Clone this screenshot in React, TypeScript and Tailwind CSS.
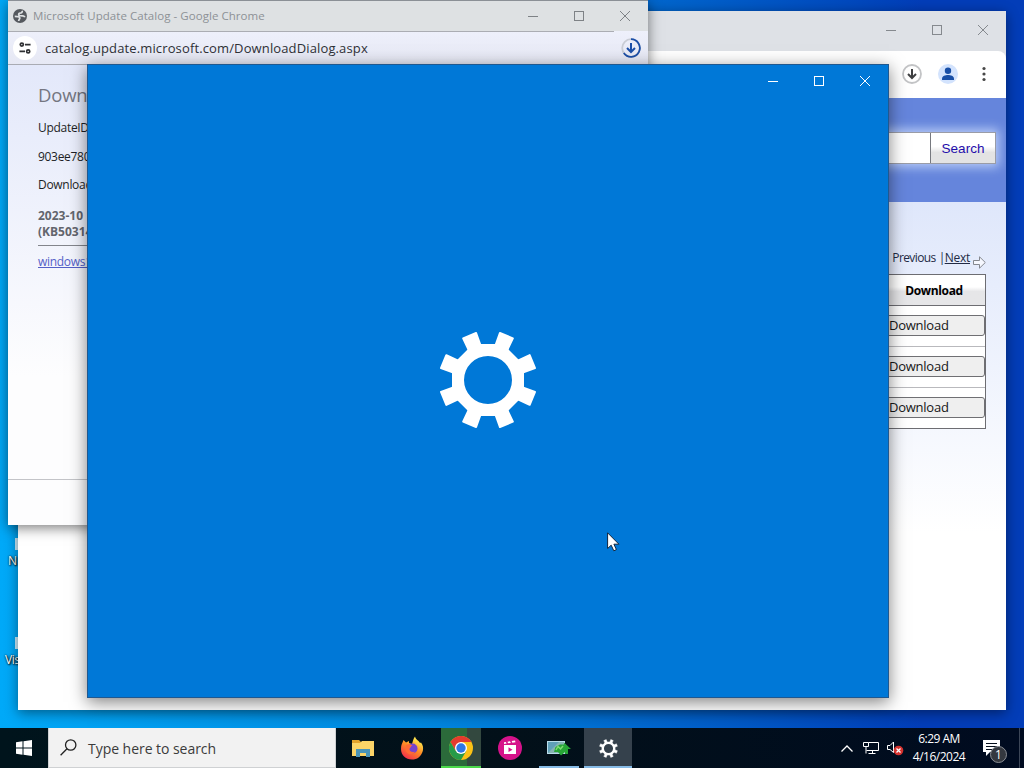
import type { ReactNode } from 'react';

const fileRows = ['Download', 'Download', 'Download'];

const teeth = [22.5, 67.5, 112.5, 157.5, 202.5, 247.5, 292.5, 337.5];

const desktopIcons = [
  { label: 'N', top: 'top-[538px]', left: 'pl-2', strip: 'ml-[7px]' },
  { label: 'Vis', top: 'top-[637px]', left: 'pl-[5px]', strip: 'ml-[10px]' },
];

function Gear({ className }: { className: string }) {
  return (
    <svg className={className} viewBox="-50 -50 100 100" aria-hidden="true">
      <path
        fillRule="evenodd"
        fill="#fff"
        d="M36-14.9 36 14.9 14.9 36-14.9 36-36 14.9-36-14.9-14.9-36 14.9-36ZM24 0A24 24 0 1 0-24 0 24 24 0 1 0 24 0Z"
      />
      {teeth.map((angle) => (
        <path
          key={angle}
          transform={`rotate(${angle})`}
          d="M32-6.2 48-7 48 7 32 6.2Z"
          fill="#fff"
          stroke="#fff"
          strokeWidth="2"
          strokeLinejoin="round"
        />
      ))}
    </svg>
  );
}

function CaptionButtons({ className }: { className: string }) {
  return (
    <div className={`flex ${className}`}>
      <span className="flex h-[30px] w-[46px] items-center justify-center">
        <svg width="10" height="10" viewBox="0 0 10 10" shapeRendering="crispEdges">
          <path d="M0 5.5H10" stroke="currentColor" />
        </svg>
      </span>
      <span className="flex h-[30px] w-[46px] items-center justify-center">
        <svg width="10" height="10" viewBox="0 0 10 10" shapeRendering="crispEdges">
          <rect x="0.5" y="0.5" width="9" height="9" fill="none" stroke="currentColor" />
        </svg>
      </span>
      <span className="flex h-[30px] w-[46px] items-center justify-center">
        <svg width="10" height="10" viewBox="0 0 10 10">
          <path d="M0 0 10 10M10 0 0 10" stroke="currentColor" />
        </svg>
      </span>
    </div>
  );
}

function CatalogWindow() {
  return (
    <div className="absolute top-[11px] left-[18px] flex h-[699px] w-[988px] flex-col overflow-hidden bg-white shadow-[0_3px_12px_rgba(0,0,0,0.45)]">
      <div className="flex h-10 shrink-0 justify-end bg-[#dee1e6] pt-1">
        <CaptionButtons className="text-[#85898e]" />
      </div>
      <div className="h-[47px] shrink-0 bg-[#dee1e6]">
        <div className="flex h-full items-center justify-end gap-4 rounded-t-lg bg-white pr-3 pb-[2px]">
          <svg width="20" height="20" viewBox="0 0 20 20">
            <circle cx="10" cy="10" r="9" fill="#fff" stroke="#c3c4c6" strokeWidth="1.8" />
            <path d="M10 5V14M6 10 10 14 14 10" fill="none" stroke="#3f4042" strokeWidth="2" />
          </svg>
          <svg width="20" height="20" viewBox="0 0 20 20">
            <circle cx="10" cy="10" r="10" fill="#d3e3fd" />
            <circle cx="10" cy="6.800" r="3.200" fill="#174ea6" />
            <path d="M4 16V14.500C4 12 7.500 11 10 11S16 12 16 14.500V16Z" fill="#174ea6" />
          </svg>
          <svg width="20" height="20" viewBox="0 0 20 20" fill="#474747">
            <circle cx="10" cy="4.500" r="1.600" />
            <circle cx="10" cy="10" r="1.600" />
            <circle cx="10" cy="15.500" r="1.600" />
          </svg>
        </div>
      </div>
      <div className="flex h-[104px] shrink-0 items-start justify-end bg-[#6585dc] pt-[34px] pr-[10px]">
        <div className="flex h-8 w-[300px] border border-[#9a9ca6] bg-white shadow-[0_0_10px_3px_rgba(214,228,255,0.75)]">
          <div className="flex-1" />
          <div className="flex w-[65px] items-center justify-center border-l border-[#77797f] bg-linear-to-b from-white from-45% to-[#e3e3e3] to-65% pt-[2px] font-['Liberation_Sans'] text-[13.5px] text-[#1f0dab]">
            Search
          </div>
        </div>
      </div>
      <div className="flex flex-1 flex-col items-end bg-linear-to-b from-[#dfe7fb] to-white to-65% pr-5">
        <div className="mt-[47px] flex h-[18px] items-center text-[12px] text-[#222a44]">
          <span className="tracking-[-0.6px]">Previous</span>
          <span className="mr-[2px] ml-[3px] w-[4px]">|</span>
          <span className="tracking-[-0.25px] underline">Next</span>
          <svg className="mt-2 ml-[3px]" width="13" height="13" viewBox="0 0 13 13">
            <path d="M.5 4.500H6.500V.8L12.300 6.500 6.500 12.200V8.500H.5Z" fill="#f6f8ff" stroke="#85888f" />
          </svg>
        </div>
        <div className="mt-[7px] w-[101px] border border-l-0 border-[#6d6d72] bg-white">
          <div className="flex h-[31px] items-center justify-center border-b border-[#6d6d72] bg-linear-to-b from-white from-40% to-[#e6e6e8] to-55% pt-[2px] pr-[2px] text-[12px] font-bold tracking-[-0.35px] text-black">
            Download
          </div>
          {fileRows.map((label, i) => (
            <div key={i} className="h-[41px] border-b border-[#b9b9bd] pt-[9px] last:h-10 last:border-b-0">
              <div className="flex h-[21px] items-center rounded-r-[3px] border border-[#6f6f73] bg-[#efefef] pl-[3px] text-[13px] tracking-[-0.25px] text-[#161616]">
                {label}
              </div>
            </div>
          ))}
        </div>
      </div>
    </div>
  );
}

function DownloadDialog() {
  return (
    <div className="absolute top-0 left-2 flex h-[525px] w-[640px] flex-col overflow-hidden border-t border-[#8b9096] bg-white shadow-[0_3px_12px_rgba(0,0,0,0.5)]">
      <div className="flex h-[30px] shrink-0 items-center bg-[#dee1e3]">
        <svg className="mb-px ml-[5px] shrink-0" width="14" height="14" viewBox="0 0 16 16">
          <circle cx="8" cy="8" r="8" fill="#55595e" />
          <path
            d="M10.500 2C11 4 9.500 4.800 7.800 4.800 6 5 6 7.300 8 7.600 10.500 7.600 13 8 13.500 9.500M2 8.300C4.500 8.300 7.500 8.600 7.800 10.300 7.800 11.500 6.500 12 6.500 13.800"
            fill="none"
            stroke="#dee1e3"
            strokeWidth="2"
          />
        </svg>
        <span className="ml-[6px] flex-1 text-[11.5px] tracking-[0.05px] text-[#8d9196]">
          Microsoft Update Catalog - Google Chrome
        </span>
        <CaptionButtons className="text-[#7e8286]" />
      </div>
      <div className="flex h-[34px] shrink-0 items-center border-b border-[#a9abb3] bg-linear-to-b from-[#eef0fb] to-[#e6e8f4]">
        <div className="flex h-full flex-1 items-center border-t border-[#abadb3] pl-[5px]">
          <span className="flex size-6 items-center justify-center rounded-full bg-white">
            <svg width="12" height="12" viewBox="0 0 14 14" fill="none" stroke="#2f3033" strokeWidth="2">
              <circle cx="3.300" cy="3" r="1.800" />
              <path d="M7 3H13.500M.5 11H7" />
              <circle cx="10.700" cy="11" r="1.800" />
            </svg>
          </span>
          <span className="ml-2 pt-px text-[13px] tracking-[0.13px] text-[#2f3136]">
            catalog.update.microsoft.com/DownloadDialog.aspx
          </span>
        </div>
        <div className="w-[34px] pl-[7px]">
          <svg width="20" height="20" viewBox="0 0 20 20" fill="none">
            <circle cx="10" cy="10" r="8.800" stroke="#c9ccd4" strokeWidth="1.800" />
            <path d="M10 1.200A8.800 8.800 0 1 1 2.800 15" stroke="#1c4fa8" strokeWidth="1.800" />
            <path d="M10 5V14M6 10 10 14 14 10" stroke="#1c4fa8" strokeWidth="2" />
          </svg>
        </div>
      </div>
      <div className="flex flex-1 flex-col bg-linear-to-b from-[#e3e8fa] to-[#fdfdfe] to-75% pl-[30px] text-[12px] tracking-[-0.3px] text-[#1d1f26]">
        <h1 className="mt-4 h-7 text-[18.5px] leading-7 font-normal tracking-[-0.2px] text-[#747681]">Down</h1>
        <p className="mt-[11px] leading-4">UpdateID</p>
        <p className="mt-[13px] leading-4">903ee780</p>
        <p className="mt-3 leading-4">Download</p>
        <div className="mt-[15px] h-[38px] border-b border-[#83858c] leading-4 font-bold tracking-normal text-[#63656d]">
          <p>2023-10</p>
          <p>(KB50314</p>
        </div>
        <p className="mt-2 leading-4 tracking-[-0.3px] text-[#5360c8] underline">windows1</p>
      </div>
      <div className="h-[46px] shrink-0 border-t border-[#c3c4c8] bg-[#fdfdfe]" />
    </div>
  );
}

function SettingsSplash() {
  return (
    <div className="absolute top-[64px] left-[87px] flex h-[634px] w-[802px] flex-col border border-[#20588f] bg-[#0078d7] shadow-[0_4px_16px_rgba(0,0,0,0.5)]">
      <div className="flex h-8 justify-end">
        <CaptionButtons className="pt-px text-white" />
      </div>
      <div className="flex flex-1 items-start justify-center pt-[233px]">
        <Gear className="size-[100px]" />
      </div>
    </div>
  );
}

function TaskButton({ children, className = '' }: { children: ReactNode; className?: string }) {
  return <div className={`relative flex h-10 w-12 items-center justify-center ${className}`}>{children}</div>;
}

function Taskbar() {
  return (
    <div className="absolute inset-x-0 bottom-0 flex h-10 bg-linear-to-r from-[#00141c] via-[#021019] to-[#000b20] text-white">
      <div className="flex w-12 items-center justify-center">
        <svg width="16" height="16" viewBox="0 0 16 16" fill="#fff">
          <path d="M0 2.200 6.500 1.300V7.500H0ZM7.500 1.200 16 0V7.500H7.500ZM0 8.500H6.500V14.700L0 13.800ZM7.500 8.500H16V16L7.500 14.800Z" />
        </svg>
      </div>
      <div className="flex w-72 items-center border border-t-0 border-[#cfd1d3] bg-[#f2f2f2] text-[#3b3b3b]">
        <svg className="ml-[11px]" width="17" height="17" viewBox="0 0 17 17" fill="none" stroke="#222" strokeWidth="1.300">
          <circle cx="10.700" cy="6" r="5.200" />
          <path d="M7 9.800.6 16.200" />
        </svg>
        <span className="ml-[11px] pt-[2px] text-[14px] tracking-[-0.04px]">Type here to search</span>
      </div>
      <div className="ml-[3px] flex gap-px">
        <TaskButton>
          <svg width="22" height="18" viewBox="0 0 22 18">
            <path d="M0 1H7L9 3V6H0Z" fill="#e3a32c" />
            <path d="M0 4H8L10 2H22V17H0Z" fill="#fbd468" />
            <path d="M4 10H18V18H14V14H8V18H4Z" fill="#4a94b8" />
          </svg>
        </TaskButton>
        <TaskButton>
          <svg width="24" height="24" viewBox="0 0 24 24">
            <defs>
              <linearGradient id="fox" x1="0.800" y1="0" x2="0.200" y2="1">
                <stop offset="0.150" stopColor="#ffe14a" />
                <stop offset="0.500" stopColor="#ff8a24" />
                <stop offset="1" stopColor="#f2264f" />
              </linearGradient>
            </defs>
            <path d="M3.500 4 6 6.500 9 5 9 7 12 8C13 5 13.500 2 15 .5 16 4 19 4.500 20 7L21 6.500C23 9 23.500 12 22.800 15 21 21 17 23.500 12 23.500 5.500 23.500 1 19 1 13 1 9 2 7.500 2.500 6.500Z" fill="url(#fox)" />
            <circle cx="12.500" cy="12.500" r="5" fill="#7643cf" />
            <path d="M6 9C8 7.500 11 8 12.500 10 10 10 11 12 9.500 12.500 9 15 12 17 15 15.500 13 20 6 19 5.500 13Z" fill="#ff6a35" />
          </svg>
        </TaskButton>
        <TaskButton>
          <div className="flex h-10 w-10 items-center justify-center border-b-2 border-[#4bd84b] bg-linear-to-r from-[#2b6a3a] from-65% to-[#33483f] to-65%">
            <svg className="mt-[2px]" width="24" height="24" viewBox="0 0 24 24">
              <circle cx="12" cy="12" r="12" fill="#fbc116" />
              <path d="M12 6H22.400A12 12 0 0 0 1.600 6L6.800 15Z" fill="#e33b2e" />
              <path d="M1.600 6A12 12 0 0 0 12 24L17.200 15 12 12 6.800 15Z" fill="#269b48" />
              <circle cx="12" cy="12" r="6" fill="#fff" />
              <circle cx="12" cy="12" r="4.700" fill="#2f77e5" />
            </svg>
          </div>
        </TaskButton>
        <TaskButton>
          <svg width="24" height="24" viewBox="0 0 24 24">
            <circle cx="12" cy="12" r="12" fill="#d6128a" />
            <path d="M6 9H18V18H6Z" fill="#fff" />
            <path d="M6 8 6 6.300 7.800 6 8.600 7.600ZM10 7.300 9.500 5.700 12 5.300 12.800 6.900ZM14.300 6.700 13.700 5 17 4.500 17.500 6.200Z" fill="#fff" />
            <path d="M10.500 11.300 14.500 13.700 10.500 16.100Z" fill="#d6128a" />
          </svg>
        </TaskButton>
        <TaskButton>
          <svg width="24" height="18" viewBox="0 0 24 18">
            <path d="M0 2H18V15H0Z" fill="#b9dcea" />
            <path d="M1 3H17V14H1Z" fill="#5f9fb8" />
            <path d="M1 14 12 3H17V14Z" fill="#86b3b3" />
            <path d="M7 13 8.500 8 13 5.500H17V3.500L24 10H21V15H18V13L14 16.500 11 13Z" fill="#27a536" />
            <path d="M9 11 11 7.500 13.500 10 16 7" fill="none" stroke="#7edc70" strokeWidth="1.500" />
          </svg>
          <span className="absolute bottom-0 h-[2px] w-10 bg-[#86bbe6]" />
        </TaskButton>
        <TaskButton className="bg-[#35414c]">
          <Gear className="size-[19px]" />
          <span className="absolute bottom-0 h-[2px] w-12 bg-[#86bbe6]" />
        </TaskButton>
      </div>
      <div className="ml-auto flex items-center">
        <svg width="12" height="7" viewBox="0 0 12 7" fill="none" stroke="#fff" strokeWidth="1.300">
          <path d="M.5 6.500 6 1 11.500 6.500" />
        </svg>
        <svg className="ml-[10px]" width="16" height="14" viewBox="0 0 16 14" fill="none" stroke="#fff">
          <path d="M5.500 1.500H15.500V9.500H3.500M9.500 9.500V12.500M5.500 12.500H12.500M.5 1.500H5.500V5.500H.5ZM3 5.500V12.500" />
        </svg>
        <svg className="ml-2" width="17" height="16" viewBox="0 0 17 16">
          <path d="M.5 5.500H3L6.500 2V12.500L3 9.500H.5Z" fill="none" stroke="#fff" />
          <circle cx="11.500" cy="10.500" r="4.800" fill="#d5322e" />
          <path d="M9.500 8.500 13.500 12.500M13.500 8.500 9.500 12.500" stroke="#fff" strokeWidth="1.300" />
        </svg>
        <div className="ml-[3px] w-16 text-center text-[12px] leading-[18px] tracking-[-0.5px] whitespace-nowrap">
          <p>6:29 AM</p>
          <p>4/16/2024</p>
        </div>
        <div className="relative ml-[12px] h-10 w-[24px]">
          <svg className="mt-3" width="17" height="16" viewBox="0 0 17 16">
            <path d="M0 0H17V12H7L3 16V12H0Z" fill="#fff" />
            <path d="M3 3.500H14M3 6.500H14M3 9.500H10" stroke="#07101d" />
          </svg>
          <span className="absolute top-[18px] left-[7px] flex size-[17px] items-center justify-center rounded-full border border-[#8b8f95] bg-[#34383f] text-[12px] leading-none">
            1
          </span>
        </div>
        <div className="ml-[12px] h-10 w-[5px] border-l border-[#3c4657]" />
      </div>
    </div>
  );
}

export default function App() {
  return (
    <div className="relative h-[768px] w-[1024px] overflow-hidden bg-linear-to-r from-[#00a9f8] via-[#0089e0] via-40% to-[#033db8] to-90% font-['Open_Sans','Noto_Sans',sans-serif]">
      {desktopIcons.map((icon) => (
        <div key={icon.label} className={`absolute left-0 w-12 ${icon.top} ${icon.left}`}>
          <div className={`h-3 w-6 bg-white/80 ${icon.strip}`} />
          <p className="mt-[3px] text-[12px] leading-4 tracking-[-0.4px] text-white [text-shadow:1px_1px_2px_#000,0_0_2px_#000]">
            {icon.label}
          </p>
        </div>
      ))}
      <CatalogWindow />
      <DownloadDialog />
      <SettingsSplash />
      <svg className="absolute top-[532px] left-[607px]" width="13" height="20" viewBox="0 0 13 20">
        <path d="M.6.800V16.500L4.200 13.200 6.800 18.800 9.400 17.600 6.900 12.200H11.900Z" fill="#fff" stroke="#10243c" strokeWidth="1" />
      </svg>
      <Taskbar />
    </div>
  );
}
